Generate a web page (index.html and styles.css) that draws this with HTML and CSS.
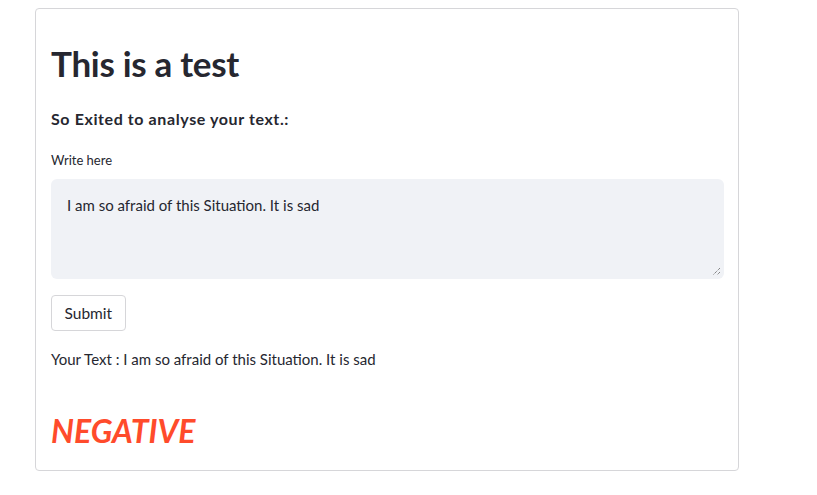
FILE: index.html
```html
<!DOCTYPE html>
<html>
<head>
<meta charset="utf-8">
<link rel="stylesheet" href="styles.css">
</head>
<body>
<div class="card">
  <h1 class="title">This is a test</h1>
  <p class="subtitle">So Exited to analyse your text.:</p>
  <label class="label">Write here</label>
  <div class="area">
    <span class="area-text">I am so afraid of this Situation. It is sad</span>
    <svg class="grip" width="9" height="9" viewBox="0 0 9 9"><path d="M8 1 L1 8 M8 5 L5 8" stroke="#555" stroke-width="1" stroke-dasharray="1 1"/></svg>
  </div>
  <button class="btn">Submit</button>
  <p class="result">Your Text : I am so afraid of this Situation. It is sad</p>
  <h2 class="verdict">NEGATIVE</h2>
</div>
</body>
</html>
```
FILE: styles.css
```css
html, body { margin: 0; padding: 0; background: #fff; }
body { font-family: "Lato", "Open Sans", sans-serif; color: #262730; }
.card {
  margin: 8px 0 0 35px;
  width: 673px;
  height: 430px;
  border: 1px solid #d6d6d9;
  border-radius: 4px;
  padding: 31px 14px 0 15px;
  display: flex;
  flex-direction: column;
  align-items: flex-start;
}
.title { margin: 0; font-size: 35px; line-height: 46px; font-weight: 700; letter-spacing: -0.3px; }
.subtitle { margin: 23px 0 0; font-size: 16px; font-weight: 700; line-height: 20px; letter-spacing: 0.6px; }
.label { margin-top: 23px; font-size: 13px; line-height: 16px; }
.area {
  margin-top: 11px; width: 673px; height: 100px; box-sizing: border-box;
  background: #f0f2f6; border-radius: 6px; padding: 15px 16px; position: relative;
  font-size: 15px; line-height: 22px;
}
.grip { position: absolute; right: 3px; bottom: 3px; }
.btn {
  margin-top: 16px; height: 36px; padding: 0 12.5px; background: #fff;
  border: 1px solid #d6d6d9; border-radius: 4px; font-family: inherit; font-size: 15.5px; color: #262730;
}
.result { margin: 17px 0 0; font-size: 15px; line-height: 22px; }
.verdict { margin: 41px 0 0; font-size: 32px; line-height: 40px; font-style: italic; font-weight: 700; color: #ff4b2b; }
```
